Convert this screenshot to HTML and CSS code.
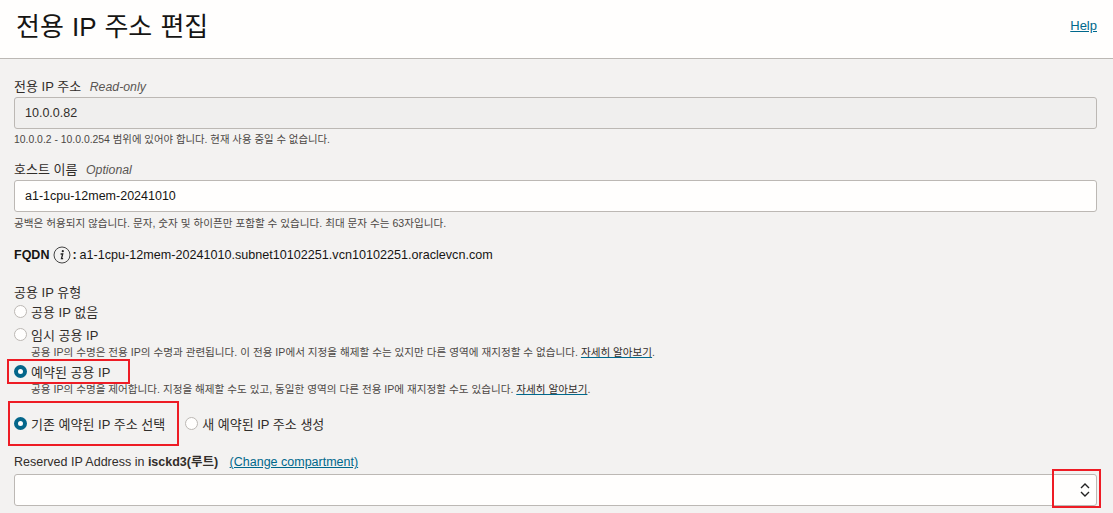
FILE: index.html
```html
<!DOCTYPE html>
<html>
<head>
<meta name="viewport" content="width=device-width, initial-scale=1">
<link rel="stylesheet" href="styles.css">
</head>
<body>

<div class="header">
  <h1>전용 IP 주소 편집</h1>
  <a class="helpLink" href="#">Help</a>
</div>

<div class="content">
  <div class="field ipField">
    <label class="fieldLabel">전용 IP 주소 <em>Read-only</em></label>
    <input class="textInput readOnly" type="text" value="10.0.0.82" readonly>
    <p class="hint ipHint">10.0.0.2 - 10.0.0.254 범위에 있어야 합니다. 현재 사용 중일 수 없습니다.</p>
  </div>

  <div class="field hostField">
    <label class="fieldLabel">호스트 이름 <em>Optional</em></label>
    <input class="textInput" type="text" value="a1-1cpu-12mem-20241010">
    <p class="hint">공백은 허용되지 않습니다. 문자, 숫자 및 하이픈만 포함할 수 있습니다. 최대 문자 수는 63자입니다.</p>
  </div>

  <div class="fqdn">
    <strong>FQDN</strong>
    <svg class="infoIcon" width="18" height="18" viewBox="0 0 18 18">
      <circle cx="9" cy="9" r="8" fill="none" stroke="#444" stroke-width="1"/>
      <circle cx="9.8" cy="5.2" r="1.1" fill="#222"/>
      <path d="M7.6 8h2.1l-1.2 4.6h1.6" fill="none" stroke="#222" stroke-width="1.3"/>
    </svg><strong>:</strong>
    <span>a1-1cpu-12mem-20241010.subnet10102251.vcn10102251.oraclevcn.com</span>
  </div>

  <div class="publicIp">
    <div class="fieldLabel">공용 IP 유형</div>
    <div class="radioRow"><span class="radio"></span>공용 IP 없음</div>
    <div class="radioRow rowGap"><span class="radio"></span>임시 공용 IP</div>
    <p class="radioHint">공용 IP의 수명은 전용 IP의 수명과 관련됩니다. 이 전용 IP에서 지정을 해제할 수는 있지만 다른 영역에 재지정할 수 없습니다. <a href="#">자세히 알아보기</a>.</p>
    <div class="radioRow"><span class="radio checked"></span>예약된 공용 IP</div>
    <p class="radioHint">공용 IP의 수명을 제어합니다. 지정을 해제할 수도 있고, 동일한 영역의 다른 전용 IP에 재지정할 수도 있습니다. <a href="#">자세히 알아보기</a>.</p>
  </div>

  <div class="sourceRow">
    <div class="radioRow"><span class="radio checked"></span>기존 예약된 IP 주소 선택</div>
    <div class="radioRow"><span class="radio"></span>새 예약된 IP 주소 생성</div>
  </div>

  <div class="fieldLabel reservedLabel">Reserved IP Address in <strong>isckd3(루트)</strong> <a class="changeLink" href="#">(Change compartment)</a></div>
  <div class="selectBox">
    <svg width="12" height="16" viewBox="0 0 12 16">
      <path d="M2 6l4-4 4 4M2 10l4 4 4-4" fill="none" stroke="#222" stroke-width="1.4"/>
    </svg>
  </div>
</div>

<!-- red annotation boxes drawn over the screenshot -->
<div class="mark markPublic"></div>
<div class="mark markSource"></div>
<div class="mark markSelect"></div>

</body>
</html>
```

FILE: styles.css
```css
html {
  height: 100%;
}

body {
  margin: 0;
  height: 513px;
  overflow: hidden;
  position: relative;
  background: #f3f2f1;
  color: #312d2a;
}

* {
  box-sizing: border-box;
  font-family: "Liberation Sans", "Noto Sans CJK KR", sans-serif;
}

/* Page header */
.header {
  height: 59px;
  padding: 0 16px;
  display: flex;
  align-items: center;
  justify-content: space-between;
  background: #fffefd;
  border-bottom: 1px solid #bcb8b4;
}

.header h1 {
  margin: 0 0 10px 0;
  font-size: 26px;
  font-weight: 400;
  word-spacing: 1px;
  color: #161513;
}

.helpLink {
  margin: 0 0 7px 0;
  font-size: 13px;
  color: #00688c;
}

/* Form area */
.content {
  padding: 20px 16px 0 14px;
}

.fieldLabel {
  display: block;
  font-size: 13px;
  line-height: 16px;
  color: #312d2a;
}

.fieldLabel em {
  margin-left: 5px;
  font-size: 12.3px;
  color: #5a5653;
}

.textInput {
  display: block;
  width: 100%;
  height: 32px;
  margin-top: 2px;
  padding: 0 10px;
  border: 1px solid #bcb8b4;
  border-radius: 3px;
  background: #fffefd;
  font-size: 12.5px;
  color: #161513;
}

.textInput.readOnly {
  background: #f0efee;
  color: #312d2a;
}

.hint {
  margin: 4px 0 0 0;
  font-size: 10.6px;
  line-height: 14px;
  color: #4c4845;
}

.ipHint {
  font-size: 10.4px;
}

.hostField {
  margin-top: 15px;
}

/* FQDN line */
.fqdn {
  display: flex;
  align-items: center;
  margin-top: 15px;
  font-size: 12.6px;
  line-height: 20px;
  color: #161513;
}

.fqdn strong {
  font-size: 12.5px;
}

.fqdn span {
  margin-left: 3px;
}

.infoIcon {
  margin-left: 4px;
  margin-right: 1px;
}

/* Radio groups */
.publicIp {
  margin-top: 20px;
}

.radioRow {
  display: flex;
  align-items: center;
  gap: 4px;
  height: 20px;
  font-size: 13px;
  color: #312d2a;
}

.rowGap {
  margin-top: 3px;
}

.radio {
  width: 13px;
  height: 13px;
  border: 1px solid #bcb8b4;
  border-radius: 50%;
  background: #fffefd;
  flex-shrink: 0;
}

.radio.checked {
  border: 4px solid #04668a;
  background: #fffefd;
}

.radioHint {
  margin: 1px 0 2px 17px;
  font-size: 10.6px;
  line-height: 14px;
  color: #4c4845;
}

.radioHint a {
  color: #312d2a;
  text-decoration-color: #00688c;
}

.sourceRow {
  display: flex;
  gap: 20px;
  margin-top: 17px;
}

.reservedLabel {
  margin-top: 21px;
  font-size: 12.5px;
}

.reservedLabel strong {
  color: #312d2a;
}

.changeLink {
  margin-left: 8px;
  color: #00688c;
}

.selectBox {
  display: flex;
  align-items: center;
  justify-content: flex-end;
  height: 32px;
  margin-top: 4px;
  padding-right: 5px;
  border: 1px solid #bcb8b4;
  border-radius: 3px;
  background: #fffefd;
}

/* Red marks */
.mark {
  position: absolute;
  border: 2px solid #ee1c25;
}

.markPublic {
  left: 7px;
  top: 359px;
  width: 123px;
  height: 25px;
}

.markSource {
  left: 8px;
  top: 401px;
  width: 171px;
  height: 45px;
}

.markSelect {
  left: 1052px;
  top: 469px;
  width: 49px;
  height: 39px;
}
```
